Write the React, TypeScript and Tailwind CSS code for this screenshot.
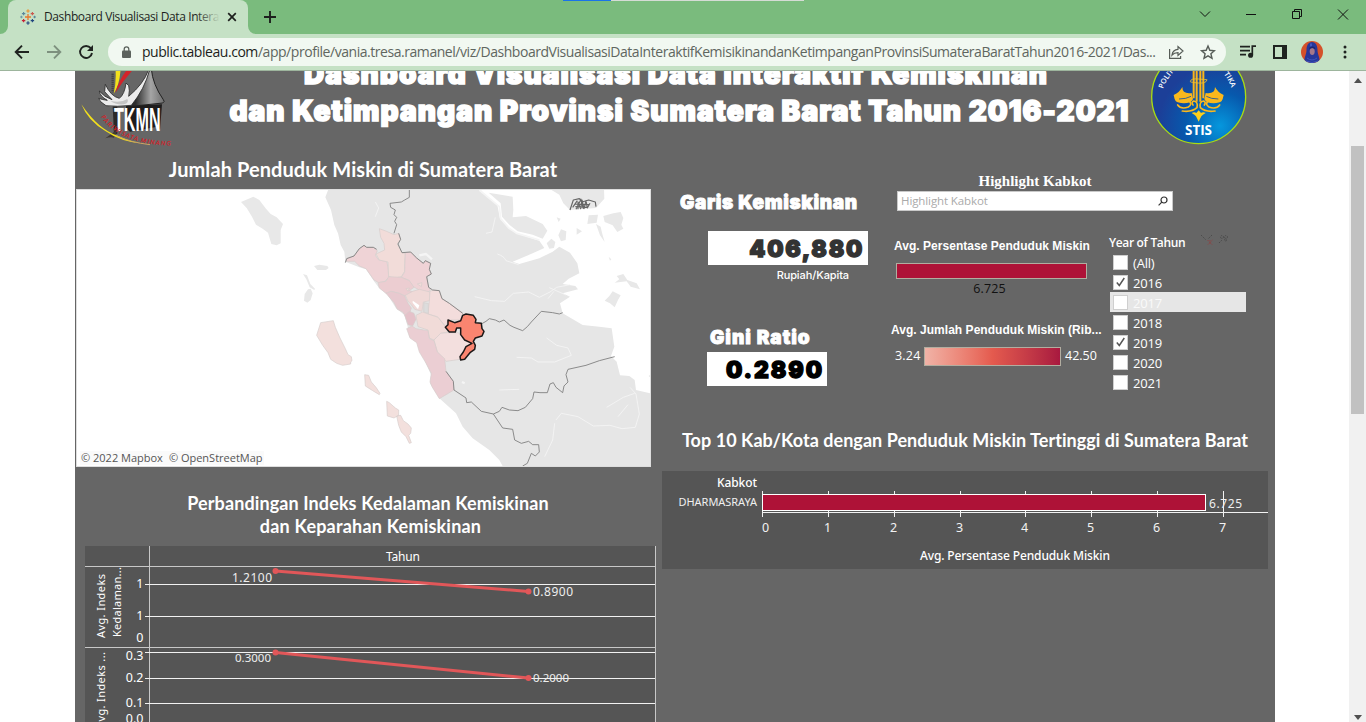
import type { ReactNode } from 'react';

const HEAVY = "font-['Inter'] font-black";
const HUMAN = "font-['Lato'] font-bold text-white whitespace-nowrap";

function TableauMark() {
  const pluses: [number, number, number, string][] = [
    [8, 8, 3, '#e8762d'],
    [3.6, 4.6, 1.7, '#5b879b'],
    [12.4, 4.6, 1.7, '#c9584e'],
    [3.6, 11.6, 1.7, '#c72035'],
    [12.4, 11.6, 1.7, '#1f457e'],
    [8, 2, 1.7, '#eb912c'],
    [8, 14, 1.7, '#1f457e'],
    [1.4, 8, 1.3, '#7099a6'],
    [14.6, 8, 1.3, '#59879b'],
  ];
  return (
    <svg width="16" height="16" viewBox="0 0 16 16" className="shrink-0">
      {pluses.map(([x, y, r, c], i) => (
        <path key={i} d={`M${x - r} ${y}H${x + r}M${x} ${y - r}V${y + r}`} stroke={c} strokeWidth={i ? 1.1 : 1.3} />
      ))}
    </svg>
  );
}

function TabStrip() {
  return (
    <div className="relative flex h-[34px] bg-[#7abb7d] pl-2">
      <div className="relative flex w-[240px] items-center rounded-t-lg bg-[#c5e1c5] pl-3">
        <TableauMark />
        <div className="relative ml-2 w-[176px] overflow-hidden whitespace-nowrap font-['Open_Sans',sans-serif] text-[12px] tracking-[-0.39px] text-[#1d1f1d]">
          Dashboard Visualisasi Data Interaktif
          <div className="absolute inset-y-0 right-0 w-6 bg-gradient-to-r from-transparent to-[#c5e1c5]" />
        </div>
        <svg width="10" height="10" viewBox="0 0 10 10" className="ml-[7px]" fill="none" stroke="#1d1f1d" strokeWidth="1.7">
          <path d="M1.2 1.2l7.6 7.6M8.8 1.2L1.2 8.8" />
        </svg>
        <svg width="8" height="8" viewBox="0 0 8 8" className="absolute -left-2 bottom-0" fill="#c5e1c5">
          <path d="M8 0v8H0a8 8 0 0 0 8-8z" />
        </svg>
        <svg width="8" height="8" viewBox="0 0 8 8" className="absolute -right-2 bottom-0" fill="#c5e1c5">
          <path d="M0 0v8h8a8 8 0 0 1-8-8z" />
        </svg>
      </div>
      <svg width="12" height="12" viewBox="0 0 12 12" className="ml-4 mt-[11px]" stroke="#1d1f1d" strokeWidth="1.9">
        <path d="M0 6h12M6 0v12" />
      </svg>
      <div className="ml-auto flex items-center pb-[6px]">
        <svg width="161" height="14" viewBox="0 0 161 14" fill="none" stroke="#111" strokeWidth="1" className="mr-4">
          <path d="M11 4.5l5 5 5-5" />
          <path d="M57 7.5h10" />
          <path d="M103.500 4.500h7v7h-7zM105.500 4v-1.500h7v7H111" />
          <path d="M149 2.500l10 10M159 2.500l-10 10" />
        </svg>
      </div>
      <div className="absolute left-[563px] top-0 flex h-px w-[241px]">
        <div className="w-12 bg-[#1a73e8]" />
        <div className="flex-1 bg-[#d5dcd5]" />
      </div>
    </div>
  );
}

function Avatar() {
  return (
    <svg width="22" height="22" viewBox="0 0 22 22">
      <defs>
        <clipPath id="av">
          <circle cx="11" cy="11" r="11" />
        </clipPath>
      </defs>
      <g clipPath="url(#av)">
        <path d="M0 0h22v22H0z" fill="#d4512a" />
        <path d="M11 1C7 1 5.500 5 5.500 9c0 4-2 6-2.500 13h16C18.500 15 16.500 13 16.500 9c0-4-1.500-8-5.500-8z" fill="#27379a" />
        <path d="M9 2.500h2v3H9z" fill="#4257c0" />
        <ellipse cx="11.200" cy="10.500" rx="2.500" ry="3.400" fill="#a5788a" />
        <path d="M8 8.500q3-3 6.500 0l-.5-2q-3-2-5.500 0z" fill="#1b2670" />
        <path d="M6 17q5 4 10 0M5 20q6 3 12 0" stroke="#3f54bd" fill="none" />
      </g>
    </svg>
  );
}

function Toolbar() {
  return (
    <div className="flex h-[37px] items-center border-b border-[#9db59d] bg-[#c5e1c5] pb-px">
      <svg width="86" height="16" viewBox="0 0 86 16" fill="none" strokeWidth="1.9" className="ml-[14px]">
        <path d="M15 8H2M8 1.700L1.700 8 8 14.300" stroke="#1f2320" />
        <path d="M33 8h13M40 1.700L46.300 8 40 14.300" stroke="#7d907e" />
        <path d="M76.800 4.200A6 6 0 1 0 78 9" stroke="#1f2320" />
        <path d="M79 1v6h-6z" fill="#1f2320" />
      </svg>
      <div className="ml-2 flex h-7 w-[1118px] items-center rounded-full bg-[#f1f8f1] pl-[14px]">
        <svg width="9" height="12" viewBox="0 0 9 12" className="shrink-0">
          <path d="M2.200 5V3.200a2.300 2.300 0 0 1 4.600 0V5" fill="none" stroke="#5c625d" strokeWidth="1.300" />
          <rect x="0" y="4.500" width="9" height="7.500" rx="1" fill="#5c625d" />
        </svg>
        <div className="ml-[11px] w-[1020px] whitespace-nowrap font-['Open_Sans',sans-serif] text-[14px] tracking-[-0.453px] text-[#5f6660]">
          <span className="text-[#1c1f1c]">public.tableau.com</span>
          /app/profile/vania.tresa.ramanel/viz/DashboardVisualisasiDataInteraktifKemisikinandanKetimpanganProvinsiSumateraBaratTahun2016-2021/Das...
        </div>
        <svg width="48" height="16" viewBox="0 0 48 16" fill="none" stroke="#565c57" strokeWidth="1.200" className="ml-[6px]">
          <path d="M1.600 5v9.400h11v-2.500" />
          <path d="M4 11c.5-3.500 2.500-5.500 6-5.700V2.500l5 4.500-5 4.500V8.600C7.500 8.600 5.500 9.300 4 11z" />
          <path d="M40 2l1.800 4.300 4.600.4-3.500 3 1.100 4.600-4-2.500-4 2.500 1.100-4.600-3.500-3 4.600-.4z" strokeWidth="1.400" />
        </svg>
      </div>
      <svg width="16" height="13" viewBox="0 0 16 13" className="ml-[14px]" fill="none" stroke="#1f2320" strokeWidth="1.700">
        <path d="M0 1.600h10M0 5.600h10M0 9.600h6M12.300 10V1.200H16" />
        <circle cx="10.600" cy="10.200" r="1.700" fill="#1f2320" />
      </svg>
      <svg width="14" height="14" viewBox="0 0 14 14" className="ml-[17px]">
        <path d="M1 1h12v12H1z" fill="none" stroke="#1f2320" strokeWidth="2" />
        <path d="M9 1h5v12H9z" fill="#1f2320" />
      </svg>
      <div className="ml-[14px]">
        <Avatar />
      </div>
      <svg width="4" height="14" viewBox="0 0 4 14" className="ml-5" fill="#1f2320">
        <circle cx="2" cy="2" r="1.500" />
        <circle cx="2" cy="7" r="1.500" />
        <circle cx="2" cy="12" r="1.500" />
      </svg>
    </div>
  );
}

function HouseLogo() {
  return (
    <svg width="95" height="80" viewBox="0 0 285 240" className="shrink-0">
      <defs>
        <linearGradient id="roof" x1="0" x2="1">
          <stop offset="0.150" stopColor="#2c2c2c" />
          <stop offset="0.600" stopColor="#a5a5a5" />
          <stop offset="1" stopColor="#6e6e6e" />
        </linearGradient>
      </defs>
      <path d="M106 -10H122Q120 40 101 68Q110 30 106 -10z" fill="#f3e01c" />
      <path d="M142 -5L160 -5Q130 28 106 66Q118 24 142 -5z" fill="#d2232a" />
      <path d="M98 8v56" stroke="#3a3a3a" strokeWidth="7" strokeDasharray="3 3" />
      <path d="M138 104L246 100L240 176L228 168L150 182L138 170z" fill="#1e1c1c" />
      <path d="M98 104L112 106V188L102 190z" fill="#2b2928" />
      <path d="M210 -6Q196 34 158 76Q148 92 154 106L248 96Q256 92 250 86Q218 40 214 -6z" fill="url(#roof)" stroke="#222" strokeWidth="3" />
      <path d="M209 -4Q194 54 154 103Q110 108 78 104Q58 92 56 82Q66 86 82 88Q60 76 58 60Q72 78 96 86L74 62L76 40Q92 76 118 82Q134 70 138 36L146 44Q150 58 146 76Q190 40 206 -4z" fill="#ececec" stroke="#2a2a2a" strokeWidth="2.500" />
      <path d="M92 90Q124 96 142 84Q148 96 132 100Q106 102 92 90z" fill="#c4c4c4" />
      <text x="102" y="180" textLength="140" lengthAdjust="spacingAndGlyphs" fill="#fff" className="font-['Liberation_Sans'] text-[102px] font-bold">
        TKMN
      </text>
      <path d="M76 202L114 174L102 200Q92 196 76 202z" fill="#403a36" />
      <path d="M4 100Q56 176 112 194Q152 212 196 220Q120 212 76 180Q24 150 4 100z" fill="#f3e01c" />
      <path d="M110 194Q150 214 210 221" fill="none" stroke="#cda562" strokeWidth="3" />
      <path id="arc" d="M62 138Q120 222 276 224" fill="none" />
      <text className="font-['Lato'] text-[19px] font-bold italic" fill="#d2232a">
        <textPath href="#arc" textLength="236">PARIWISATA MINANG</textPath>
      </text>
    </svg>
  );
}

function StisLogo() {
  return (
    <svg width="105" height="80" viewBox="0 0 315 240" className="shrink-0">
      <defs>
        <radialGradient id="sea" gradientUnits="userSpaceOnUse" cx="225" cy="165" r="185">
          <stop offset="0" stopColor="#0597dd" />
          <stop offset="0.550" stopColor="#0759ad" />
          <stop offset="1" stopColor="#1c3f98" />
        </radialGradient>
      </defs>
      <circle cx="161" cy="77" r="141" fill="url(#sea)" stroke="#a8dc14" strokeWidth="4" />
      <path id="ringL" d="M54 54Q66 18 100 -10" fill="none" />
      <path id="ringR" d="M214 -14Q246 12 260 54" fill="none" />
      <g className="font-['Open_Sans'] text-[22px] font-semibold" fill="#fff">
        <text><textPath href="#ringL">POLIT</textPath></text>
        <text><textPath href="#ringR" startOffset="32">TIKA</textPath></text>
      </g>
      <path d="M146 -4v86M155 -4v96M166 -4v96M175 -4v86" stroke="#f9b51b" strokeWidth="6" />
      <path d="M136 32Q136 22 160 24T186 26Q184 38 160 36T136 32" fill="none" stroke="#f0c028" strokeWidth="2.500" />
      <g fill="#fbb81c">
        <path d="M140 66Q112 70 112 48Q104 64 86 72Q88 84 92 90Q100 98 126 96Q140 94 144 84zM182 66Q210 70 210 48Q218 64 236 72Q234 84 230 90Q222 98 196 96Q182 94 178 84z" />
      </g>
      <g fill="none" stroke="#fbb81c" strokeLinecap="round">
        <path d="M98 102Q108 116 130 108Q142 100 134 92M224 102Q214 116 192 108Q180 100 188 92" strokeWidth="5" />
        <path d="M112 120Q140 124 156 110Q160 92 146 90Q138 94 144 102M210 120Q182 124 166 110Q162 92 176 90Q184 94 178 102" strokeWidth="5" />
      </g>
      <path d="M102 84Q124 84 138 76M220 84Q198 84 184 76" stroke="#1451a0" strokeWidth="2.500" fill="none" />
      <path d="M140 126q8-4 14 0l7-8 7 8q6-4 14 0q-10 6-13 10q-4 8-8 16q-4-8-8-16q-3-4-13-10z" fill="#fbd01c" />
      <text x="120" y="193" textLength="81" lengthAdjust="spacingAndGlyphs" className="font-['Open_Sans'] text-[40px] font-bold" fill="#fff">STIS</text>
    </svg>
  );
}

function SumatraMap() {
  return (
    <svg width="575" height="278" viewBox="76 189 575 278" className="block bg-white">
      <g transform="translate(366 180) scale(.33333)" strokeLinejoin="round">
        <path
          fill="#e6e6e6"
          d="M-110 20L-122 52-105 90-95 135-84 160-76 195-65 215-62 245-20 262 0 268 25 305 40 325 65 345 90 385 115 405 125 440 130 470 155 490 180 550 195 585 192 610 220 655 270 700 290 740 320 775 370 810 400 840 412 862H860V642L810 630 806 600 790 588 762 586 752 545 735 528 745 500 737 445 700 440 650 435 590 400 582 370 612 350 590 340 636 328 628 318 590 312 608 296 640 280 634 250 612 218 580 200 560 215 520 235 460 252 440 245 500 220 535 204 520 182 450 160 425 140 402 116 394 75 360 48 335 20z"
        />
        <g fill="#e8e8e8">
          <path d="M368 38L440 50 442 90 440 112 480 108 530 132 544 152 530 176 500 164 455 154 430 134 408 110 404 70zM550 26L580 44 592 70 612 90 690 84 715 56 714 26zM556 176l12 10-4 18-14 2-8-16zM585 148l16 6-2 26-14 4-8-18zM572 112l12 4-6 10zM668 106l28-2-4 24-28 4zM712 108l30-8 22-4 8 18-6 20 6 12-18 10-14-20-24-10zM632 144l16 10-16 10zM690 132l14 8 4 18 8 28-14-20zM716 362l14-14 10-14 24 12-8 14-10 22-14-12zM752 288l20-6 12 18 28 10 10 18-28-8-12-16-36 4 14-10zM728 230l8 8-4 4zM848 588l8-6v14z" />
          <path d="M-375 66L-338 50-320 60-300 86-286 102-268 112-249 132-256 150-256 190-268 196-284 192-294 158-310 146-330 134-342 110-358 84zM-156 258l16-4 24 4 4 6-8 6-26 0zM-189 282l12 4 10 26 14 14-2 4-14-8-10-24zM-174 328l8-2 6 14-6 20-10 8-10-6 2-20z" />
        </g>
        <g fill="none" stroke="#f5f5f5" strokeWidth="2.500">
          <path d="M394 222q20 6 26 20l38 12M326 350l50 12 40 2 26-24 46-4 32 16 32-16 20-14 40-8M360 160l18-4 10-44M28 110l10-26-10-18M452 532l44 2 20 12 50 0 50-20-10-22-34-8-30-22M400 630l60-2M570 720l16-20 50 10 46 28 50-2 36 10 40-4 12-40-10-60-18-20M722 682l50-30 34-12M536 830l24-50 6-50M756 710l30-36M600 345l-50-22M564 334l-18 22" />
          <path d="M340 30l60 50 4 36 24 28 24 16 68 20" strokeWidth="5" />
          <path d="M160 226l20-4 18 16M288 606l8 4" strokeWidth="7" />
        </g>
        <g stroke="#d6cdcb" strokeWidth="2">
          <path fill="#efd3d6" d="M-60 244L-56 234-36 228-20 206-5 196 0 202 22 202 34 212 28 226 38 240 62 244 66 262 68 292 56 304 38 308 24 300 0 266-20 258-34 244z" />
          <path fill="#f2dcd9" d="M40 146L62 154 84 164 98 160 104 178 94 192 108 218 118 220 116 250 116 274 106 290 88 294 68 290 66 246 40 240 30 222 56 210 54 190 44 172z" />
          <path fill="#efd3d6" d="M118 218L134 216 152 234 172 250 178 242 194 250 190 268 196 282 182 290 188 322 194 330 186 336 160 330 142 320 128 300 106 292 116 276z" />
          <path fill="#eccdd1" d="M36 308L60 304 68 290 106 292 130 302 144 322 130 332 142 336 118 348 100 340 74 334 60 340 40 324z" />
          <path fill="#e8c9cf" d="M60 340L76 334 100 340 116 348 126 370 136 384 132 396 118 408 110 396 94 388 84 368z" />
          <path fill="#f0d9d7" d="M118 346L140 334 160 328 192 336 192 362 172 366 168 394 146 388 136 374 126 364z" />
          <path fill="#f3dddc" d="M192 334L202 330 220 332 228 356 250 370 290 398 290 420 246 420 240 440 214 410 186 402 190 364z" />
          <path fill="#e5c1c9" d="M116 406L130 394 144 400 150 418 140 438 126 434z" />
          <path fill="#f1dbd8" d="M150 406L170 396 186 402 216 412 238 440 246 456 224 460 204 480 190 474 186 450 156 440z" />
          <path fill="#f3dfde" d="M204 480L224 460 246 458 276 458 320 490 300 508 282 538 240 544 214 516z" />
          <path fill="#ebced3" d="M122 446L138 438 150 446 186 452 190 476 204 482 214 516 236 536 240 574 262 604 264 630 220 656 198 620 192 606 196 580 178 546 160 516 152 488 132 474z" />
          <path fill="#fff" stroke="none" d="M140 362l20 14-4 12-16-20z" />
          <path fill="#dcdcdc" d="M173 368l14 2v30l-14-4z" />
          <path fill="#f2dcd9" d="M154 312l14-4-2 12zM120 326l10-2-4 10z" />
          <path fill="#f3e0dd" d="M-148 466L-136 428-98 422-92 442-78 474-62 506-54 524-44 530-42 542-46 546-46 552-70 556-88 550-106 538-114 518-130 496zM-4 584L8 586 16 606 30 622 42 640 40 644 20 632-2 618zM62 664L70 668 88 684 98 690 98 706 84 714 64 708zM92 708L104 706 112 722 126 732 136 744 134 760 128 766 136 788 130 790 120 770 106 756 98 736z" />
        </g>
        <path
          fill="none"
          stroke="#7c7c7c"
          strokeWidth="2.600"
          d="M130 30L130 52 116 60 106 66 72 70 74 82 88 90 84 104 92 112 86 124 92 134 84 160M-62 248L-58 236-36 228-20 206-6 196 2 202 22 202 32 208M98 160L104 178 96 192 108 218 134 216 152 234 172 250 178 242 194 250 190 268 196 282 182 290 188 322 200 330 220 332 228 356 250 370 290 400M346 432L360 424 370 416 388 420 400 426 414 420 432 436 444 442 470 452 484 440 496 426 526 394 560 398 580 402 590 398M240 574L262 604 264 630 300 654 302 668 316 666 346 694 382 702 400 694 408 682 430 690 456 692 478 682 500 656 504 636 522 638 544 638 552 612 562 608 570 622 590 638 594 618 606 606 600 584 606 568 660 556 700 542 746 530M382 702L410 744 440 748 446 780 466 790 488 784 500 794 518 794 520 816 508 828 496 820 484 850 470 858"
        />
        <path fill="none" stroke="#666" strokeWidth="3.500" d="M612 90L622 60 640 56 648 66 668 60 688 66 690 80M620 82L634 62M630 88l14-28M636 88V66l8 20 4-26 6 26 6-24 4 22 8-14M626 72l44 2M644 56l8 30M628 80l36 2" />
        <path
          fill="#fa8570"
          stroke="#1c1818"
          strokeWidth="4.500"
          d="M290 406L300 402 322 406 330 418 328 428 346 430 348 446 354 454 348 468 328 474 322 484 328 496 326 508 312 518 296 538 284 540 282 530 292 516 300 500 318 490 296 480 284 464 284 444 272 444 268 456 250 456 238 442 246 434 246 420 266 428 284 422z"
        />
      </g>
      <rect x="76.500" y="189.500" width="574" height="277" fill="none" stroke="#dedede" />
    </svg>
  );
}

function DepthChart() {
  const grid = [584, 616, 652, 678, 703];
  const tick: [string, number][] = [['1', 588], ['1', 620], ['0', 642], ['0.3', 660], ['0.2', 682], ['0.1', 707], ['0.0', 723]];
  return (
    <svg width="571" height="177" viewBox="85 545 571 177" className="ml-[10px] block font-['Noto_Sans',sans-serif]">
      <path d="M85 546H656V722H85z" fill="#555" />
      <g shapeRendering="crispEdges">
        <path d="M85 566.500H656M85 647.500H656M149.500 546V722M655.500 546V722" stroke="#c8c8c8" />
        {grid.map((y) => (
          <path key={y} d={`M145 ${y + 0.5}H655`} stroke="#f2f2f2" />
        ))}
      </g>
      <g fill="none" stroke="#e15759" strokeWidth="3">
        <path d="M275.500 571L528.500 591.500M275.500 652.500L528.500 678" />
      </g>
      <g fill="#e15759">
        <circle cx="275.500" cy="571" r="3" />
        <circle cx="528.500" cy="591.500" r="3" />
        <circle cx="275.500" cy="652.500" r="3" />
        <circle cx="528.500" cy="678" r="3" />
      </g>
      <g fill="#fff" fontSize="12">
        <text x="386" y="561" textLength="34">Tahun</text>
        {tick.map(([t, y], i) => (
          <text key={i} x="143.500" y={y} textAnchor="end" fontSize="12.500">{t}</text>
        ))}
        <text x="232" y="582" textLength="40" fill="#eee">1.2100</text>
        <text x="235" y="662" textLength="36" fontSize="11.500" fill="#eee">0.3000</text>
        <text x="533" y="596" textLength="40" fill="#eee">0.8900</text>
        <text x="533" y="682" textLength="36" fontSize="11.500" fill="#eee">0.2000</text>
        <text transform="translate(105 638) rotate(-90)" textLength="64" fontSize="11">Avg. Indeks</text>
        <text transform="translate(121 637) rotate(-90)" textLength="70" fontSize="11">Kedalaman...</text>
        <text transform="translate(105 729) rotate(-90)" textLength="77" fontSize="11">Avg. Indeks ...</text>
      </g>
    </svg>
  );
}

function TopTenChart() {
  const xs = [762.5, 828.5, 894.5, 960.5, 1025.5, 1091.5, 1157.5, 1223.5];
  return (
    <svg width="606" height="98" viewBox="662 471 606 98" className="block bg-[#555] font-['Noto_Sans',sans-serif]">
      <g shapeRendering="crispEdges" stroke="#f2f2f2">
        {xs.map((x) => (
          <path key={x} d={`M${x} 491V517`} />
        ))}
        <path d="M762 512.500H1268" />
        <rect x="762.500" y="494.500" width="443" height="16" fill="#ae1237" stroke="#fff" />
      </g>
      <g fill="#fff" fontSize="12">
        <text x="717" y="487" textLength="40" fontWeight="500">Kabkot</text>
        <text x="678.500" y="506" textLength="78.500" fontSize="11" fill="#f0f0f0">DHARMASRAYA</text>
        <text x="1209" y="507.500" textLength="33" fill="#eee">6.725</text>
        {xs.map((x, i) => (
          <text key={i} x={i ? x - 0.8 : x + 3.2} y="532" textAnchor="middle" fontSize="12.500" fill="#f2f2f2">{i}</text>
        ))}
        <text x="920" y="560" textLength="190" fontWeight="500">Avg. Persentase Penduduk Miskin</text>
      </g>
    </svg>
  );
}

function YearRow({ label, state }: { label: string; state?: 'on' | 'hover' }) {
  return (
    <div className={state === 'hover' ? 'flex h-5 w-[136px] items-center bg-[#e6e6e6] pl-[3px]' : 'flex h-5 w-[136px] items-center pl-[3px]'}>
      <div className="flex h-[15px] w-[15px] items-center justify-center border border-[#cfcfcf] bg-white">
        {state === 'on' && (
          <svg width="9" height="10" viewBox="0 0 9 10" fill="none" stroke="#555" strokeWidth="1.500">
            <path d="M.8 5.500L3.300 8.500 8.300 1" />
          </svg>
        )}
      </div>
      <span className={state === 'hover' ? 'ml-[5px] pt-[2px] text-[13px] leading-[18px] tracking-[-0.2px] text-[#fafafa]' : 'ml-[5px] pt-[2px] text-[13px] leading-[18px] tracking-[-0.2px] text-white'}>{label}</span>
    </div>
  );
}

function Label({ children }: { children: ReactNode }) {
  return (
    <div className="h-4 whitespace-nowrap font-['Liberation_Sans',sans-serif] text-[12px] font-bold leading-4 tracking-[0.03px] text-white">{children}</div>
  );
}

function Indicators() {
  return (
    <div className="w-[225px]">
      <div className={`${HEAVY} mt-[36px] h-6 whitespace-nowrap pl-[18px] text-[19px] leading-6 tracking-[0.63px] text-white [-webkit-text-stroke:0.9px_white]`}>
        Garis Kemiskinan
      </div>
      <div className={`${HEAVY} ml-[46px] mt-[16px] h-[34px] w-40 bg-white pr-1 text-right text-[23px] leading-[37px] tracking-[1.7px] text-[#333] [-webkit-text-stroke:1.3px_#333]`}>
        406,880
      </div>
      <div className="mr-[38px] h-5 text-right font-['Inter'] text-[11px] font-medium leading-5 tracking-[-0.1px] text-white">Rupiah/Kapita</div>
      <div className={`${HEAVY} mt-[41px] h-6 whitespace-nowrap pl-[48px] text-[19px] leading-6 tracking-[1px] text-white [-webkit-text-stroke:0.9px_white]`}>
        Gini Ratio
      </div>
      <div className={`${HEAVY} ml-[45px] mt-[2px] h-[34px] w-[120px] bg-white pr-[3px] text-right text-[23px] leading-[37px] tracking-[1.9px] text-black [-webkit-text-stroke:1.3px_black]`}>
        0.2890
      </div>
    </div>
  );
}

function Filters() {
  return (
    <div className="w-[388px] font-['Open_Sans',sans-serif]">
      <div className="mt-[17px] h-[19px] w-[296px] text-center font-['Liberation_Serif',serif] text-[15px] font-bold leading-[19px] text-white">Highlight Kabkot</div>
      <div className="ml-[10px] flex h-5 w-[276px] items-center justify-between border border-[#c9c9c9] bg-white pl-[3px] pr-1 text-[11.5px] tracking-[-0.1px] text-[#aaa]">
        Highlight Kabkot
        <svg width="10" height="10" viewBox="0 0 10 10" fill="none" stroke="#333" strokeWidth="1.200">
          <circle cx="6" cy="4" r="3" />
          <path d="M3.800 6.200L.6 9.400" />
        </svg>
      </div>
      <div className="flex">
        <div className="w-[222px]">
          <div className="mt-[27px] pl-[7px]">
            <Label>Avg. Persentase Penduduk Miskin</Label>
          </div>
          <div className="ml-[9px] mt-[9px] h-4 w-[191px] border border-[#b2ada0] bg-[#ae1237]" />
          <div className="ml-[9px] h-5 w-[187px] text-center text-[12.5px] leading-5 tracking-[0.1px] text-[#111]">6.725</div>
          <div className="mt-[23px] pl-1">
            <Label>Avg. Jumlah Penduduk Miskin (Rib...</Label>
          </div>
          <div className="mt-[9px] flex h-[19px] items-center whitespace-nowrap pl-2 text-[12.5px] text-white">
            <span className="w-[29px] tracking-[0.2px]">3.24</span>
            <div className="h-[19px] w-[137px] border border-[#b2ada0] bg-gradient-to-r from-[#f0b3a7] via-[#e45a4e] to-[#a8183f]" />
            <span className="ml-1">42.50</span>
          </div>
        </div>
        <div className="pt-[22px]">
          <div className="flex h-[19px] items-center">
            <span className="pt-px text-[12px] font-semibold tracking-[-0.33px] text-white">Year of Tahun</span>
            <svg width="28" height="12" viewBox="0 0 28 12" className="mb-[5px] ml-[15px]" fill="none" stroke="#4c4c4c" strokeDasharray="1.500 1">
              <path d="M1 1l5 5M12 1L8 5M19 9l3-3" />
              <circle cx="22" cy="3" r="1.500" />
              <circle cx="26" cy="3" r="1.500" />
              <circle cx="25.500" cy="6" r="1" />
              <path d="M7.500 6l5 5M12.500 6l-5 5M10 6v5" stroke="#8a4646" />
            </svg>
          </div>
          <div className="ml-px">
            <YearRow label="(All)" />
            <YearRow label="2016" state="on" />
            <YearRow label="2017" state="hover" />
            <YearRow label="2018" />
            <YearRow label="2019" state="on" />
            <YearRow label="2020" />
            <YearRow label="2021" />
          </div>
        </div>
      </div>
    </div>
  );
}

export default function App() {
  return (
    <div className="flex h-[722px] w-[1366px] flex-col overflow-hidden bg-white">
      <TabStrip />
      <Toolbar />
      <div className="flex min-h-0 flex-1">
        <main className="ml-[75px] w-[1200px] overflow-hidden bg-[#666]">
          <header className="flex h-[84px] overflow-hidden pl-[5px]">
            <HouseLogo />
            <div className={`${HEAVY} -mt-[14px] ml-[29px] w-[951px] whitespace-nowrap text-center text-[28px] leading-[36px] text-white [-webkit-text-stroke:1.6px_white]`}>
              <div className="-mt-px mb-px pr-[7px] tracking-[1.03px]">Dashboard Visualisasi Data Interaktif Kemiskinan</div>
              <div className="tracking-[1.06px]">dan Ketimpangan Provinsi Sumatera Barat Tahun 2016-2021</div>
            </div>
            <div className="-ml-[10px]">
              <StisLogo />
            </div>
          </header>
          <div className="flex">
            <section className="w-[587px]">
              <h2 className={`${HUMAN} h-[34px] w-[576px] text-center text-[20px] leading-[29px] tracking-[0.08px]`}>Jumlah Penduduk Miskin di Sumatera Barat</h2>
              <div className="relative ml-px w-[575px]">
                <SumatraMap />
                <div className="absolute bottom-[2px] left-1 flex gap-[6px] whitespace-nowrap bg-[#fafafa] px-[1px] font-['Open_Sans',sans-serif] text-[11px] leading-[14px] text-[#555]">
                  <span>© 2022 Mapbox</span>
                  <span>© OpenStreetMap</span>
                </div>
              </div>
              <h2 className={`${HUMAN} h-[78px] w-[586px] pt-[25px] text-center text-[18px] leading-[23px] tracking-[0.11px]`}>
                Perbandingan Indeks Kedalaman Kemiskinan
                <br />
                <span className="pl-[5px] tracking-[0.2px]">dan Keparahan Kemiskinan</span>
              </h2>
              <DepthChart />
            </section>
            <section className="w-[613px]">
              <div className="flex h-[270px]">
                <Indicators />
                <Filters />
              </div>
              <h2 className={`${HUMAN} h-[46px] w-[606px] text-center text-[18px] leading-[30px] tracking-[0.04px]`}>
                Top 10 Kab/Kota dengan Penduduk Miskin Tertinggi di Sumatera Barat
              </h2>
              <TopTenChart />
            </section>
          </div>
        </main>
        <div className="ml-auto flex w-[17px] flex-col items-center bg-[#f1f1f1]">
          <svg width="8" height="5" viewBox="0 0 8 5" className="mt-[7px]" fill="#505050">
            <path d="M4 0l4 5H0z" />
          </svg>
          <div className="mt-[63px] h-[268px] w-[13px] bg-[#c1c1c1]" />
          <svg width="8" height="5" viewBox="0 0 8 5" className="mb-[2px] mt-auto" fill="#505050">
            <path d="M4 5L0 0h8z" />
          </svg>
        </div>
      </div>
    </div>
  );
}
